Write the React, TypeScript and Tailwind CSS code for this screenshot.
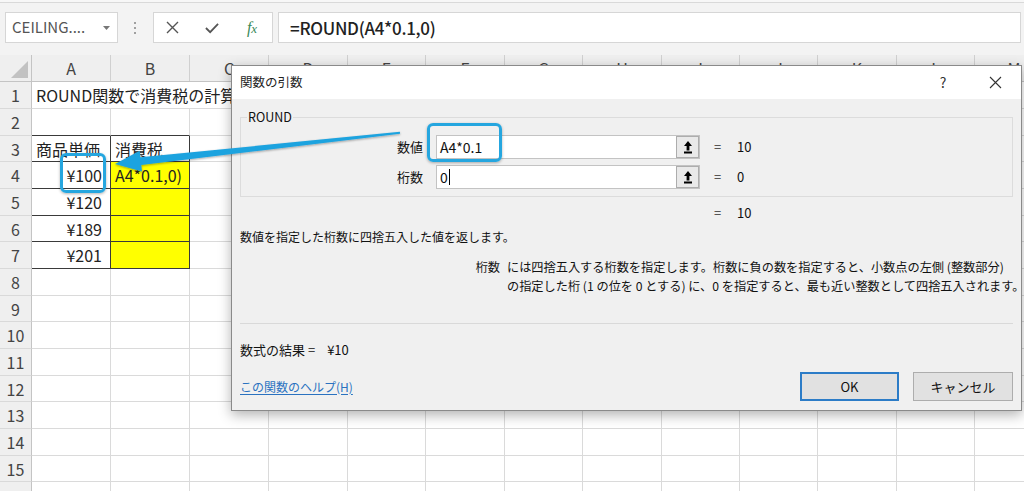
import type { ReactNode } from 'react'

const COLS = [
    { name: 'A', w: 'w-[79px]' },
    { name: 'B', w: 'w-[79px]' },
    { name: 'C', w: 'w-[79px]' },
    { name: 'D', w: 'w-[79px]' },
    { name: 'E', w: 'w-[78px]' },
    { name: 'F', w: 'w-[79px]' },
    { name: 'G', w: 'w-[78px]' },
    { name: 'H', w: 'w-[79px]' },
    { name: 'I', w: 'w-[78px]' },
    { name: 'J', w: 'w-[78px]' },
    { name: 'K', w: 'w-[79px]' },
    { name: 'L', w: 'w-[78px]' },
    { name: 'M', w: 'w-[79px]' },
]

const ROWS = [
    'h-[27px]', 'h-[27px]', 'h-[26px]', 'h-[27px]', 'h-[27px]', 'h-[26px]', 'h-[27px]', 'h-[27px]',
    'h-[26px]', 'h-[27px]', 'h-[27px]', 'h-[26px]', 'h-[27px]', 'h-[27px]', 'h-[26px]', 'h-[27px]',
]

type CellDef = {
    text?: string
    right?: boolean
    yellow?: boolean
    dark?: boolean
    darkBottom?: boolean
    noRight?: boolean
}

const CELLS: Record<string, CellDef> = {
    A1: { text: 'ROUND関数で消費税の計算', noRight: true },
    B1: { noRight: true },
    A2: { darkBottom: true },
    B2: { darkBottom: true },
    A3: { text: '商品単価', dark: true },
    B3: { text: '消費税', dark: true },
    A4: { text: '¥100', right: true, dark: true },
    B4: { text: 'A4*0.1,0)', dark: true, yellow: true },
    A5: { text: '¥120', right: true, dark: true },
    B5: { dark: true, yellow: true },
    A6: { text: '¥189', right: true, dark: true },
    B6: { dark: true, yellow: true },
    A7: { text: '¥201', right: true, dark: true },
    B7: { dark: true, yellow: true },
}

function cellBorder(def: CellDef) {
    if (def.dark) return 'border-r border-b border-[#3a3a3a]'
    if (def.darkBottom) return 'border-r border-b border-r-[#dadada] border-b-[#3a3a3a]'
    if (def.noRight) return 'border-b border-[#dadada]'
    return 'border-r border-b border-[#dadada]'
}

function Toolbar() {
    return (
        <div className="h-[55px] bg-[#f3f3f3]">
            <div className="h-[3px] border-b border-[#d9d9d9] bg-[#f7f7f7]" />
            <div className="mt-[9px] flex h-[31px] items-stretch pl-[5px] pr-[3px]">
                <div className="flex w-[113px] items-center justify-between border border-[#d6d6d6] bg-white pl-[6px] pr-[7px]">
                    <span className="text-[15px] text-[#555]">CEILING....</span>
                    <svg width="7" height="4" viewBox="0 0 7 4">
                        <path d="M0 0 H7 L3.5 4 Z" fill="#777" />
                    </svg>
                </div>
                <div className="ml-[16px] mr-[17px] flex flex-col justify-center gap-[3px]">
                    <span className="h-[2px] w-[2px] bg-[#a0a0a0]" />
                    <span className="h-[2px] w-[2px] bg-[#a0a0a0]" />
                    <span className="h-[2px] w-[2px] bg-[#a0a0a0]" />
                </div>
                <div className="flex w-[120px] items-center gap-[26px] border border-[#d6d6d6] bg-white pl-[11px]">
                    <span className="flex w-[14px] justify-center">
                        <svg width="13" height="13" viewBox="0 0 13 13">
                            <path d="M1 1 L12 12 M12 1 L1 12" stroke="#555" strokeWidth="1.4" />
                        </svg>
                    </span>
                    <span className="flex w-[14px] justify-center">
                        <svg width="15" height="12" viewBox="0 0 15 12">
                            <path d="M1 6 L5.5 10.5 L14 1.5" stroke="#555" strokeWidth="1.9" fill="none" />
                        </svg>
                    </span>
                    <span className="flex w-[14px] items-baseline justify-center font-['Liberation_Serif',serif] text-[16px] italic leading-none text-[#3b8a5a]">
                        f<span className="text-[13px]">x</span>
                    </span>
                </div>
                <div className="ml-[5px] flex flex-1 items-center border border-[#d6d6d6] bg-white pl-[11px]">
                    <span className="text-[17px] font-medium tracking-[-0.3px] text-[#222]">=ROUND(A4*0.1,0)</span>
                </div>
            </div>
        </div>
    )
}

function Sheet() {
    return (
        <div>
            <div className="flex h-[27px] border-b border-[#c4c4c4] bg-[#efefef]">
                <div className="relative w-[32px] shrink-0 border-r border-[#c4c4c4]">
                    <svg className="absolute bottom-[3px] right-[3px]" width="17" height="17" viewBox="0 0 17 17">
                        <path d="M17 0 V17 H0 Z" fill="#c2c2c2" />
                    </svg>
                </div>
                {COLS.map((c) => (
                    <div
                        key={c.name}
                        className={`${c.w} flex shrink-0 items-center justify-center border-r border-[#d0d0d0] text-[16px] text-[#444]`}
                    >
                        {c.name}
                    </div>
                ))}
            </div>
            {ROWS.map((h, i) => {
                const r = i + 1
                return (
                    <div key={r} className={`${h} flex`}>
                        <div className="flex w-[32px] shrink-0 items-center justify-center border-r border-b border-r-[#c4c4c4] border-b-[#d9d9d9] bg-[#efefef] text-[16px] text-[#444]">
                            {r <= 15 ? r : null}
                        </div>
                        {COLS.map((c) => {
                            const def = CELLS[`${c.name}${r}`] ?? {}
                            return (
                                <div
                                    key={c.name}
                                    className={`${c.w} ${cellBorder(def)} ${def.yellow ? 'bg-[#ffff00]' : ''} ${
                                        def.right ? 'justify-end pr-[8px]' : 'justify-start pl-[4px]'
                                    } flex shrink-0 items-center whitespace-nowrap text-[16px] text-[#222]`}
                                >
                                    {def.text}
                                </div>
                            )
                        })}
                    </div>
                )
            })}
        </div>
    )
}

function RefButton() {
    return (
        <div className="flex w-[23px] items-center justify-center border border-[#adadad] bg-[#e9e9e9]">
            <svg width="10" height="14" viewBox="0 0 10 14">
                <path d="M5 1 L9 6 H6.4 V10.5 H3.6 V6 H1 Z" fill="#000" />
                <rect x="1" y="11.5" width="8" height="2" fill="#000" />
            </svg>
        </div>
    )
}

function ArgRow({ label, value, result, children }: { label: string; value: ReactNode; result: string; children?: ReactNode }) {
    return (
        <div className="flex h-[24px] items-center">
            <span className="w-[182px] shrink-0 text-right text-[13px]">{label}</span>
            <div className="ml-[13px] flex h-full w-[264px] border border-[#c3c3c3] bg-white">
                <div className="flex flex-1 items-center pl-[3px] text-[14px]">
                    {value}
                    {children}
                </div>
                <RefButton />
            </div>
            <span className="ml-[14px] w-[23px] text-[13px] text-[#333]">=</span>
            <span className="text-[13px]">{result}</span>
        </div>
    )
}

function Dialog() {
    return (
        <div className="absolute left-[231px] top-[65px] flex h-[346px] w-[791px] flex-col border border-[#8a8a8a] bg-[#f0f0f0] text-[#111] shadow-[0_4px_12px_rgba(0,0,0,0.3)]">
            <div className="flex h-[33px] shrink-0 items-center justify-between bg-white pl-[8px] pr-[3px]">
                <span className="text-[12.5px] text-[#222]">関数の引数</span>
                <div className="flex items-center gap-[6px]">
                    <span className="flex w-[46px] justify-center text-[14px] text-[#333]">?</span>
                    <span className="flex w-[46px] justify-center">
                        <svg width="13" height="13" viewBox="0 0 13 13">
                            <path d="M1 1 L12 12 M12 1 L1 12" stroke="#333" strokeWidth="1.1" />
                        </svg>
                    </span>
                </div>
            </div>
            <div className="flex flex-1 flex-col px-[8px]">
                <div className="relative mt-[18px] h-[80px] border border-[#dcdcdc] pt-[17px]">
                    <span className="absolute -top-[9px] left-[6px] bg-[#f0f0f0] px-[1px] text-[12.5px] leading-[16px]">ROUND</span>
                    <ArgRow label="数値" value="A4*0.1" result="10" />
                    <div className="mt-[6px]">
                        <ArgRow label="桁数" value="0" result="0">
                            <span className="ml-[1px] h-[16px] w-px bg-black" />
                        </ArgRow>
                    </div>
                </div>
                <div className="mt-[8px] flex h-[16px] items-center pl-[474px] text-[13px]">
                    <span className="w-[23px] text-[#333]">=</span>
                    <span>10</span>
                </div>
                <p className="mt-[8px] h-[16px] text-[12px] leading-[16px]">数値を指定した桁数に四捨五入した値を返します。</p>
                <div className="mt-[13px] flex text-[12.2px] leading-[19px]">
                    <span className="w-[260px] shrink-0 text-right">桁数</span>
                    <p className="ml-[7px] whitespace-nowrap">
                        には四捨五入する桁数を指定します。桁数に負の数を指定すると、小数点の左側 (整数部分)
                        <br />
                        の指定した桁 (1 の位を 0 とする) に、0 を指定すると、最も近い整数として四捨五入されます。
                    </p>
                </div>
                <div className="mt-[27px] border-t border-[#d9d9d9]" />
                <p className="mt-[18px] h-[16px] text-[13px] leading-[16px]">
                    数式の結果 =<span className="ml-[12px]">¥10</span>
                </p>
                <div className="mt-[14px] flex h-[29px] items-center">
                    <span className="text-[12px] text-[#2a72c0] underline underline-offset-2">この関数のヘルプ(H)</span>
                    <button className="ml-auto h-full w-[99px] border-2 border-[#2c7cc7] bg-[#e1e1e1] text-[13px]">OK</button>
                    <button className="ml-[14px] h-full w-[100px] border border-[#adadad] bg-[#e1e1e1] text-[13px]">キャンセル</button>
                </div>
            </div>
        </div>
    )
}

export default function App() {
    return (
        <div className="relative h-[491px] w-[1024px] overflow-hidden bg-white font-['Noto_Sans_CJK_JP',sans-serif]">
            <Toolbar />
            <Sheet />
            <Dialog />
            <svg className="pointer-events-none absolute left-0 top-0" width="1024" height="491">
                <defs>
                    <filter id="arrow-shadow" x="-10%" y="-50%" width="120%" height="200%">
                        <feDropShadow dx="0" dy="1" stdDeviation="1.2" floodColor="#000" floodOpacity="0.35" />
                    </filter>
                </defs>
                <polygon
                    points="115,164 139.7,150.7 140.4,157.2 399.9,131.8 400.1,133.8 141.3,165.1 142,171.6"
                    fill="#1ea3df"
                    filter="url(#arrow-shadow)"
                />
            </svg>
            <div className="pointer-events-none absolute left-[60px] top-[153px] h-[40px] w-[46px] rounded-[6px] border-[3px] border-[#25a6df] shadow-[0_1px_3px_rgba(0,0,0,0.3)]" />
            <div className="pointer-events-none absolute left-[427px] top-[123px] h-[39px] w-[75px] rounded-[6px] border-[3px] border-[#25a6df] shadow-[0_1px_3px_rgba(0,0,0,0.3)]" />
        </div>
    )
}
